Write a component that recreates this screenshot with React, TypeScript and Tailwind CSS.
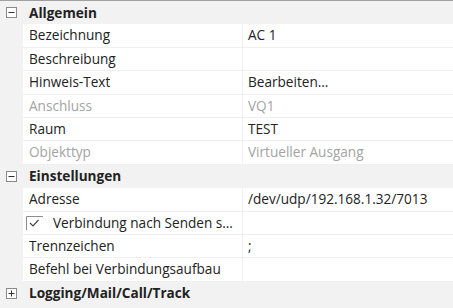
import React from "react";

type Row =
  | { kind: "header"; label: string; open: boolean }
  | { kind: "prop"; label: string; value?: string; disabled?: boolean; check?: boolean };

const rows: Row[] = [
  { kind: "header", label: "Allgemein", open: true },
  { kind: "prop", label: "Bezeichnung", value: "AC 1" },
  { kind: "prop", label: "Beschreibung", value: "" },
  { kind: "prop", label: "Hinweis-Text", value: "Bearbeiten..." },
  { kind: "prop", label: "Anschluss", value: "VQ1", disabled: true },
  { kind: "prop", label: "Raum", value: "TEST" },
  { kind: "prop", label: "Objekttyp", value: "Virtueller Ausgang", disabled: true },
  { kind: "header", label: "Einstellungen", open: true },
  { kind: "prop", label: "Adresse", value: "/dev/udp/192.168.1.32/7013" },
  { kind: "prop", label: "Verbindung nach Senden schließen", value: "", check: true },
  { kind: "prop", label: "Trennzeichen", value: ";" },
  { kind: "prop", label: "Befehl bei Verbindungsaufbau", value: "" },
  { kind: "header", label: "Logging/Mail/Call/Track", open: false },
];

function Toggle({ open }: { open: boolean }) {
  return (
    <svg width="11" height="11" viewBox="0 0 11 11" className="block">
      <rect x="0.5" y="0.5" width="10" height="10" fill="#ffffff" stroke="#8a8a8a" />
      <line x1="2.5" y1="5.5" x2="8.5" y2="5.5" stroke="#333" />
      {!open && <line x1="5.5" y1="2.5" x2="5.5" y2="8.5" stroke="#333" />}
    </svg>
  );
}

function Check() {
  return (
    <svg width="18" height="14" viewBox="0 0 18 14" className="block shrink-0">
      <path d="M0.5 14 V0.5 H17" fill="none" stroke="#8c8c8c" />
      <path d="M4 7 L7 10 L12.5 4" fill="none" stroke="#444" strokeWidth="1.2" />
    </svg>
  );
}

export default function App() {
  return (
    <div
      className="w-[453px] h-[308px] overflow-hidden bg-[#f2f2f2] border-t border-[#a0a0a0] text-[13.6px] text-[#222]"
      style={{ fontFamily: '"Open Sans", "Noto Sans", sans-serif' }}
    >
      {rows.map((r, i) =>
        r.kind === "header" ? (
          <div key={i} className="flex items-center h-[23.4px] bg-[#f2f2f2]">
            <div className="w-[23px] flex justify-center">
              <Toggle open={r.open} />
            </div>
            <div className="pl-[6px] font-bold leading-normal">{r.label}</div>
          </div>
        ) : (
          <div key={i} className="flex h-[23.4px]">
            <div className="w-[23px] shrink-0 bg-[#f2f2f2]" />
            <div className="flex flex-1 bg-white border-b border-[#f0f0f0]">
              <div
                className={
                  "w-[220px] shrink-0 flex items-center border-r border-[#f0f0f0] overflow-hidden " +
                  (r.check ? "pl-[3px] pr-[4px]" : "pl-[6px]")
                }
              >
                {r.check && <Check />}
                <span
                  className={
                    "truncate whitespace-nowrap leading-normal " +
                    (r.check ? "ml-[9px] " : "") +
                    (r.disabled ? "text-[#a3a3a3]" : "")
                  }
                >
                  {r.label}
                </span>
              </div>
              <div
                className={
                  "flex-1 flex items-center pl-[5px] leading-normal whitespace-nowrap " +
                  (r.disabled ? "text-[#a3a3a3]" : "")
                }
              >
                {r.value}
              </div>
            </div>
          </div>
        )
      )}
    </div>
  );
}
